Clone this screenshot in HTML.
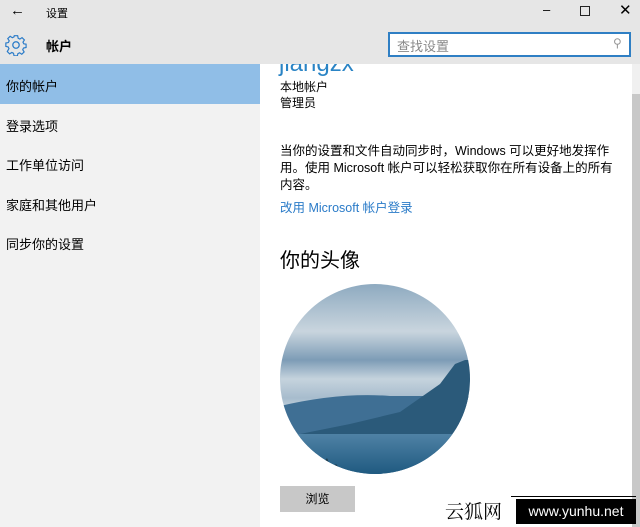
<!DOCTYPE html>
<html><head><meta charset="utf-8"><style>
*{margin:0;padding:0;box-sizing:border-box}
body{width:640px;height:527px;overflow:hidden;background:#e6e6e6;font-family:"Liberation Sans","Noto Sans CJK SC",sans-serif;position:relative;font-size:13px;color:#000}
.a{position:absolute}
</style></head><body>
<div class="a" style="left:10px;top:2px;font-size:15px">&#8592;</div>
<div class="a" style="left:46px;top:5px;font-size:11px">设置</div>
<div class="a" style="left:543px;top:2px;font-size:13px">&#8211;</div>
<div class="a" style="left:580px;top:6px;width:10px;height:10px;border:1px solid #222"></div>
<div class="a" style="left:619px;top:1px;font-size:15px">&#10005;</div>
<svg class="a" style="left:5px;top:34px" width="22" height="22" viewBox="0 0 24 24" fill="none" stroke="#2a7bc8" stroke-width="1.4"><path d="M10 2h4l.6 3 2 1 2.6-1.7 2.8 2.8L20.3 9.7l1 2 2.7.3v4l-3 .6-1 2 1.7 2.6-2.8 2.8-2.6-1.7-2 1-.6 2.6h-4l-.6-3-2-1-2.6 1.7-2.8-2.8L3.7 17.3l-1-2L0 14.7v-4l3-.6 1-2L2.3 5.5l2.8-2.8 2.6 1.7 2-1z" transform="scale(.92) translate(1 0)"/><circle cx="12" cy="12" r="3.5"/></svg>
<div class="a" style="left:46px;top:36px;font-size:13px;font-weight:bold">帐户</div>
<div class="a" style="left:388px;top:32px;width:243px;height:25px;border:2px solid #2f7fc4;background:#fff"></div>
<div class="a" style="left:397px;top:36px;font-size:13px;color:#888">查找设置</div>
<div class="a" style="left:613px;top:36px;font-size:12px;color:#999">&#9906;</div>
<div class="a" style="left:0;top:64px;width:260px;height:463px;background:#f2f2f2"></div>
<div class="a" style="left:0;top:64px;width:260px;height:40px;background:#90bee7"></div>
<div class="a" style="left:6px;top:76px">你的帐户</div>
<div class="a" style="left:6px;top:116px">登录选项</div>
<div class="a" style="left:6px;top:155px">工作单位访问</div>
<div class="a" style="left:6px;top:195px">家庭和其他用户</div>
<div class="a" style="left:6px;top:234px">同步你的设置</div>
<div class="a" style="left:260px;top:64px;width:372px;height:463px;background:#fff;overflow:hidden">
 <div class="a" style="left:19px;top:-14px;font-size:24px;color:#2a84c5">jiangzx</div>
</div>
<div class="a" style="left:632px;top:64px;width:8px;height:463px;background:#f0f0f0"></div>
<div class="a" style="left:632px;top:94px;width:8px;height:433px;background:#c8c8c8"></div>
<div class="a" style="left:280px;top:78px;font-size:12px">本地帐户</div>
<div class="a" style="left:280px;top:94px;font-size:12px">管理员</div>
<div class="a" style="left:280px;top:143px;width:338px;font-size:12.5px;line-height:17px">当你的设置和文件自动同步时，Windows 可以更好地发挥作用。使用 Microsoft 帐户可以轻松获取你在所有设备上的所有内容。</div>
<div class="a" style="left:280px;top:197px;font-size:12.5px;color:#2a7bc8">改用 Microsoft 帐户登录</div>
<div class="a" style="left:280px;top:244px;font-size:20px">你的头像</div>
<svg class="a" style="left:280px;top:284px" width="190" height="190" viewBox="0 0 190 190">
<defs><clipPath id="c"><circle cx="95" cy="95" r="95"/></clipPath>
<linearGradient id="s" x1="0" y1="0" x2="0" y2="1"><stop offset="0" stop-color="#8eaac0"/><stop offset=".25" stop-color="#c9d5de"/><stop offset=".4" stop-color="#7d9cb6"/><stop offset=".5" stop-color="#c5d3dd"/><stop offset=".6" stop-color="#a7bccd"/><stop offset=".7" stop-color="#d7e1e8"/></linearGradient>
<linearGradient id="w" x1="0" y1="0" x2="0" y2="1"><stop offset="0" stop-color="#4f82a5"/><stop offset="1" stop-color="#1f5a80"/></linearGradient></defs>
<g clip-path="url(#c)">
<rect width="190" height="190" fill="url(#s)"/>
<path d="M0 122 Q60 108 110 112 L190 112 V190 H0z" fill="#3f6f94"/>
<path d="M20 150 L70 140 120 128 160 100 175 80 185 76 190 76 V170 H20z" fill="#2b5a7a"/>
<rect y="150" width="190" height="40" fill="url(#w)"/>
<path d="M40 172 l3 8 4-6 4 10 5-4 8 10H40z" fill="#1d3a4a"/>
</g></svg>
<div class="a" style="left:280px;top:486px;width:75px;height:26px;background:#c8c8c8;text-align:center;line-height:26px;font-size:12px">浏览</div>
<div class="a" style="left:445px;top:497px;font-size:19px;font-family:'Noto Serif CJK SC',serif">云狐网</div>
<div class="a" style="left:511px;top:496px;width:125px;height:1px;background:#000"></div>
<div class="a" style="left:516px;top:499px;width:120px;height:25px;background:#000;color:#fff;font-size:14px;text-align:center;line-height:25px">www.yunhu.net</div>
</body></html>
